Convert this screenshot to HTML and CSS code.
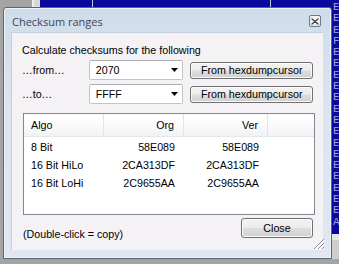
FILE: index.html
```html
<!DOCTYPE html>
<html lang="en">
<head>
    <meta charset="UTF-8">
    <meta name="viewport" content="width=device-width, initial-scale=1.0">
    <title>Checksum ranges</title>
    <link rel="stylesheet" href="styles.css">
</head>
<body>
    <div class="desktop">
        <div class="side-panel"></div>
        <div class="hexview">
            <div class="hex-col hex-col-a"></div>
            <div class="hex-col hex-col-b"></div>
            <div class="hex-edge">E<br>E<br>E<br>F<br>E<br>E<br>E<br>E<br>E<br>E<br>E<br>E<br>E<br>E<br>E<br>E<br>E<br>E<br>E<br>A</div>
        </div>
        <div class="hex-scroll"></div>

        <div class="dialog">
            <div class="titlebar">
                <span class="title">Checksum ranges</span>
                <span class="title-close">
                    <svg width="8" height="7" viewBox="0 0 8 7">
                        <path d="M1 1L7 6M7 1L1 6" stroke="#ffffff" stroke-width="3" stroke-linecap="round"/>
                        <path d="M1 1L7 6M7 1L1 6" stroke="#3c3c3c" stroke-width="1.4" stroke-linecap="round"/>
                    </svg>
                </span>
            </div>
            <div class="client">
                <p class="intro">Calculate checksums for the following</p>

                <div class="range-row">
                    <span class="range-label">…from…</span>
                    <div class="combo">
                        <span class="combo-value">2070</span>
                        <svg class="combo-arrow" width="7" height="4" viewBox="0 0 7 4"><path d="M0 0H7L3.5 4Z" fill="#000"/></svg>
                    </div>
                    <button class="button hex-button">From hexdumpcursor</button>
                </div>
                <div class="range-row">
                    <span class="range-label">…to…</span>
                    <div class="combo">
                        <span class="combo-value">FFFF</span>
                        <svg class="combo-arrow" width="7" height="4" viewBox="0 0 7 4"><path d="M0 0H7L3.5 4Z" fill="#000"/></svg>
                    </div>
                    <button class="button hex-button">From hexdumpcursor</button>
                </div>

                <div class="listview">
                    <div class="list-head">
                        <div class="cell">Algo</div>
                        <div class="cell num">Org</div>
                        <div class="cell num">Ver</div>
                        <div class="cell filler"></div>
                    </div>
                    <div class="list-row">
                        <div class="cell">8 Bit</div>
                        <div class="cell num">58E089</div>
                        <div class="cell num">58E089</div>
                    </div>
                    <div class="list-row">
                        <div class="cell">16 Bit HiLo</div>
                        <div class="cell num">2CA313DF</div>
                        <div class="cell num">2CA313DF</div>
                    </div>
                    <div class="list-row">
                        <div class="cell">16 Bit LoHi</div>
                        <div class="cell num">2C9655AA</div>
                        <div class="cell num">2C9655AA</div>
                    </div>
                </div>

                <div class="footer-row">
                    <span class="hint">(Double-click = copy)</span>
                    <button class="button close-button">Close</button>
                </div>
            </div>
            <svg class="grip" width="12" height="12" viewBox="0 0 12 12">
                <path d="M12 2L2 12M12 6L6 12M12 10L10 12" stroke="#ffffff" stroke-width="1"/>
                <path d="M11 1L1 11M11 5L5 11M11 9L9 11" stroke="#8c8f94" stroke-width="1"/>
            </svg>
        </div>
    </div>
</body>
</html>
```

FILE: styles.css
```css
/* General Styles */
* {
    box-sizing: border-box;
}

body {
    margin: 0;
    width: 339px;
    height: 264px;
    overflow: hidden;
    background-color: #a4a4a4;
    font-family: "Liberation Sans", Arial, sans-serif;
    font-size: 10.7px;
    color: #000;
}

/* Desktop behind the dialog */
.desktop {
    position: relative;
    width: 339px;
    height: 264px;
}

.side-panel {
    position: absolute;
    left: 32px;
    top: 0;
    width: 8px;
    height: 240px;
    background-color: #d8d8d8;
    border-left: 2px solid #f0f0f0;
}

.hexview {
    position: absolute;
    left: 40px;
    top: 0;
    right: 0;
    height: 234px;
    background-color: #0a0a9e;
    overflow: hidden;
}

.hex-col {
    position: absolute;
    top: 0;
    width: 1px;
    height: 100%;
    background-color: #c8c8e4;
}

.hex-col-a {
    left: 52px;
}

.hex-col-b {
    left: 230px;
}

.hex-edge {
    position: absolute;
    left: 293px;
    top: 2px;
    font-family: "Liberation Mono", monospace;
    font-size: 11px;
    line-height: 11.3px;
    color: #9fa2d8;
}

.hex-scroll {
    position: absolute;
    left: 40px;
    right: 0;
    top: 234px;
    height: 25px;
    background-color: #cdcdcd;
    border-top: 6px solid #e6e6e6;
}

/* Dialog window */
.dialog {
    position: absolute;
    left: 3px;
    top: 7px;
    width: 329px;
    height: 252px;
    padding: 0 8px 8px 7px;
    border: 1px solid #5c6673;
    border-radius: 3px 3px 0 0;
    background: linear-gradient(#cfdcea, #dbe5f0 40%, #dfe8f2);
    box-shadow: inset 0 0 0 1px #eef3f8;
}

.titlebar {
    display: flex;
    align-items: flex-start;
    height: 24px;
    padding-left: 1px;
}

.title {
    margin-top: 7px;
    font-family: "Open Sans", "Liberation Sans", sans-serif;
    font-size: 11px;
    line-height: 14px;
    color: #3d4654;
}

.title-close {
    display: flex;
    align-items: center;
    justify-content: center;
    width: 12px;
    height: 12px;
    margin: 7px 2px 0 auto;
    border: 1px solid #6f7a89;
    border-radius: 2px;
    background: linear-gradient(#f0f4f8, #d9e2ec);
}

.client {
    height: 218px;
    padding: 9px 10px 0 10px;
    background-color: #f5f2f5;
    border: 1px solid #c3d0de;
    border-width: 1px 0 0 1px;
}

.intro {
    margin: 0;
    line-height: 16px;
}

/* Range rows */
.range-row {
    display: flex;
    align-items: center;
    height: 20px;
    margin-top: 2px;
}

.range-row + .range-row {
    margin-top: 4px;
}

.range-label {
    width: 67px;
}

.combo {
    display: flex;
    align-items: center;
    width: 95px;
    height: 20px;
    padding-left: 6px;
    background-color: #fff;
    border: 1px solid #c2c4c8;
    border-top-color: #abadb3;
    border-radius: 2px;
}

.combo-arrow {
    margin-left: auto;
    margin-right: 4px;
}

/* Button Styles */
.button {
    font: inherit;
    color: #000;
    padding: 0;
    border: 1px solid #707070;
    border-radius: 3px;
    background: linear-gradient(#f3f3f3, #ececec 48%, #dedede 52%, #d0d0d0);
    box-shadow: inset 0 0 0 1px #fbfbfb;
}

.hex-button {
    width: 123px;
    height: 17px;
    margin-left: 7px;
    line-height: 13px;
}

.close-button {
    width: 72px;
    height: 20px;
}

/* List view */
.listview {
    height: 102px;
    margin: 9px -2px 0 1px;
    background-color: #fff;
    border: 1px solid #828790;
}

.list-head,
.list-row {
    display: grid;
    grid-template-columns: 80px 80px 84px 1fr;
}

.list-head {
    height: 23px;
    margin-bottom: 1px;
    background: linear-gradient(#ffffff, #fbfbfc 50%, #f1f2f4);
    border-bottom: 1px solid #e6e7ea;
}

.list-head .cell {
    line-height: 22px;
    border-right: 1px solid #e3e4e7;
}

.list-head .filler {
    border-right: none;
}

.list-row {
    height: 18px;
    line-height: 18px;
}

.cell {
    padding: 0 9px 0 7px;
    white-space: nowrap;
}

.cell.num {
    text-align: right;
}

/* Footer */
.footer-row {
    display: flex;
    justify-content: space-between;
    align-items: flex-start;
    margin-top: 3px;
}

.hint {
    margin: 8px 0 0 1px;
    line-height: 16px;
}

.grip {
    position: absolute;
    right: 6px;
    bottom: 8px;
}
```
